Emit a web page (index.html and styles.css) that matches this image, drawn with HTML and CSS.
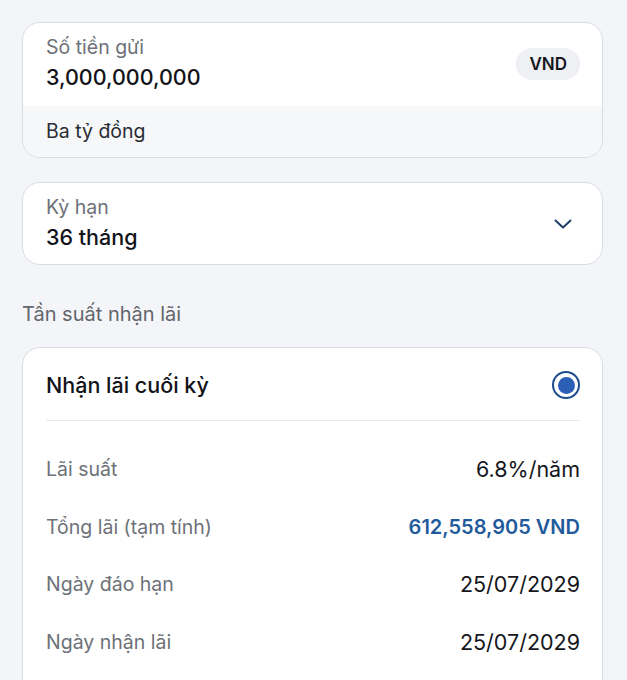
FILE: index.html
```html
<!DOCTYPE html>
<html lang="vi">

<head>
    <meta charset="UTF-8">
    <meta name="viewport" content="width=device-width, initial-scale=1.0">
    <title>Gửi tiết kiệm</title>
    <link rel="stylesheet" href="styles.css">
</head>

<body>
    <div class="page">
        <div class="card amount-card">
            <div class="amount-top">
                <div>
                    <div class="field-label">Số tiền gửi</div>
                    <div class="field-value">3,000,000,000</div>
                </div>
                <span class="currency">VND</span>
            </div>
            <div class="amount-words">Ba tỷ đồng</div>
        </div>

        <div class="card term-card">
            <div>
                <div class="field-label">Kỳ hạn</div>
                <div class="field-value">36 tháng</div>
            </div>
            <svg class="chevron" width="18" height="10" viewBox="0 0 18 10">
                <path d="M1.5 1.5 L9 8.5 L16.5 1.5" fill="none" stroke="#1f3f66" stroke-width="2" stroke-linecap="round" stroke-linejoin="round" />
            </svg>
        </div>

        <div class="section-title">Tần suất nhận lãi</div>

        <div class="card option-card">
            <div class="option-head">
                <span class="option-name">Nhận lãi cuối kỳ</span>
                <span class="radio"><span class="radio-dot"></span></span>
            </div>
            <div class="details">
                <div class="detail-row">
                    <span class="detail-label">Lãi suất</span>
                    <span class="detail-value">6.8%/năm</span>
                </div>
                <div class="detail-row">
                    <span class="detail-label">Tổng lãi (tạm tính)</span>
                    <span class="detail-value highlight">612,558,905 VND</span>
                </div>
                <div class="detail-row">
                    <span class="detail-label">Ngày đáo hạn</span>
                    <span class="detail-value">25/07/2029</span>
                </div>
                <div class="detail-row">
                    <span class="detail-label">Ngày nhận lãi</span>
                    <span class="detail-value">25/07/2029</span>
                </div>
            </div>
        </div>
    </div>
</body>

</html>
```

FILE: styles.css
```css
body {
    margin: 0;
    background-color: #f4f5f8;
    font-family: "Inter", "Noto Sans", sans-serif;
    color: #15171c;
    height: 680px;
    overflow: hidden;
}

.page {
    padding: 22px 24px 0 22px;
}

.card {
    background-color: #fff;
    border: 1px solid #d8dce2;
    border-radius: 18px;
    overflow: hidden;
}

.field-label {
    font-size: 19.5px;
    line-height: 22px;
    color: #6d7178;
}

.field-value {
    font-size: 21.5px;
    line-height: 28px;
    font-weight: 500;
    color: #111318;
    margin-top: 5px;
}

.amount-top {
    display: flex;
    align-items: center;
    justify-content: space-between;
    padding: 13px 22px 15px 23px;
}

.currency {
    background-color: #eef0f4;
    border-radius: 16px;
    padding: 0 13px;
    height: 32px;
    line-height: 32px;
    font-size: 17px;
    font-weight: 600;
    color: #15171c;
}

.amount-words {
    background-color: #f6f7f9;
    padding: 13px 23px 14px;
    font-size: 19.5px;
    line-height: 24px;
    color: #2a2d33;
}

.term-card {
    margin-top: 24px;
    display: flex;
    align-items: center;
    justify-content: space-between;
    padding: 13px 30px 13px 23px;
}

.section-title {
    margin: 38px 0 22px;
    font-size: 20px;
    line-height: 22px;
    color: #62666d;
}

.option-card {
    padding: 23px 22px 40px 23px;
}

.option-head {
    display: flex;
    align-items: center;
    justify-content: space-between;
    padding-bottom: 21px;
    border-bottom: 1px solid #e6e8ec;
}

.option-name {
    font-size: 21.5px;
    line-height: 28px;
    font-weight: 500;
    color: #111318;
}

.radio {
    width: 28px;
    height: 28px;
    box-sizing: border-box;
    border: 2.5px solid #1d4c8e;
    border-radius: 50%;
    display: flex;
    align-items: center;
    justify-content: center;
}

.radio-dot {
    width: 17px;
    height: 17px;
    border-radius: 50%;
    background-color: #2b60b6;
}

.details {
    display: flex;
    flex-direction: column;
    gap: 29.5px;
    padding-top: 34px;
}

.detail-row {
    display: flex;
    align-items: center;
    justify-content: space-between;
    line-height: 28px;
}

.detail-label {
    font-size: 19.5px;
    color: #6d7178;
}

.detail-value {
    font-size: 21.5px;
    color: #15171c;
}

.detail-value.highlight {
    font-size: 20px;
    color: #1f5b9c;
    font-weight: 600;
}
```
